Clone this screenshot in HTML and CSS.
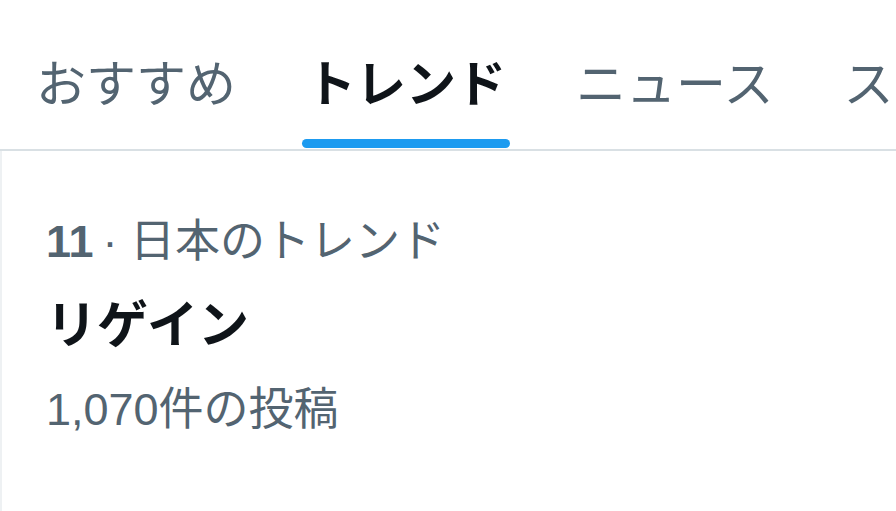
FILE: index.html
```html
<!DOCTYPE html>
<html lang="ja">
<head>
  <meta charset="UTF-8">
  <meta name="viewport" content="width=device-width, initial-scale=1.0">
  <title>トレンド</title>
  <link rel="stylesheet" href="styles.css">
</head>
<body>
  <nav class="tabs">
    <a class="tab" href="#">
      <span class="tab-label">おすすめ</span>
    </a>
    <a class="tab active" href="#">
      <span class="tab-label">トレンド<span class="indicator"></span></span>
    </a>
    <a class="tab" href="#">
      <span class="tab-label">ニュース</span>
    </a>
    <a class="tab" href="#">
      <span class="tab-label">スポーツ</span>
    </a>
  </nav>

  <div class="trend">
    <div class="trend-meta"><strong>11</strong>&thinsp;·&nbsp;日本のトレンド</div>
    <div class="trend-name">リゲイン</div>
    <div class="trend-count">1,070件の投稿</div>
  </div>
</body>
</html>
```

FILE: styles.css
```css
html, body {
  height: 100%;
}
body {
  margin: 0;
  padding: 0;
  background: #fff;
  font-family: "Liberation Sans", "Noto Sans CJK JP", sans-serif;
  color: #0f1419;
  overflow: hidden;
}
.tabs {
  display: flex;
  height: 149px;
  border-bottom: 2px solid #d9e0e4;
  white-space: nowrap;
  overflow: hidden;
}
.tab {
  display: flex;
  flex-shrink: 0;
  padding: 0 35px;
  color: #536471;
  text-decoration: none;
  font-size: 50px;
}
.tab:first-child {
  padding-left: 36px;
}
.tab-label {
  display: flex;
  flex-direction: column;
  padding-top: 57px;
  line-height: 56px;
}
.tab.active {
  color: #0f1419;
  font-weight: bold;
}
.indicator {
  display: block;
  height: 9px;
  margin: 26px -4px 0;
  border-radius: 5px;
  background: #1d9bf0;
}
.trend {
  box-sizing: border-box;
  height: 360px;
  border-left: 2px solid #eef1f3;
  padding: 49px 0 0 44px;
}
.trend-meta,
.trend-count {
  font-size: 45px;
  line-height: 84px;
  color: #536471;
}
.trend-meta strong {
  font-weight: bold;
}
.trend-name {
  font-size: 51px;
  line-height: 84px;
  font-weight: bold;
  color: #0f1419;
}
```
